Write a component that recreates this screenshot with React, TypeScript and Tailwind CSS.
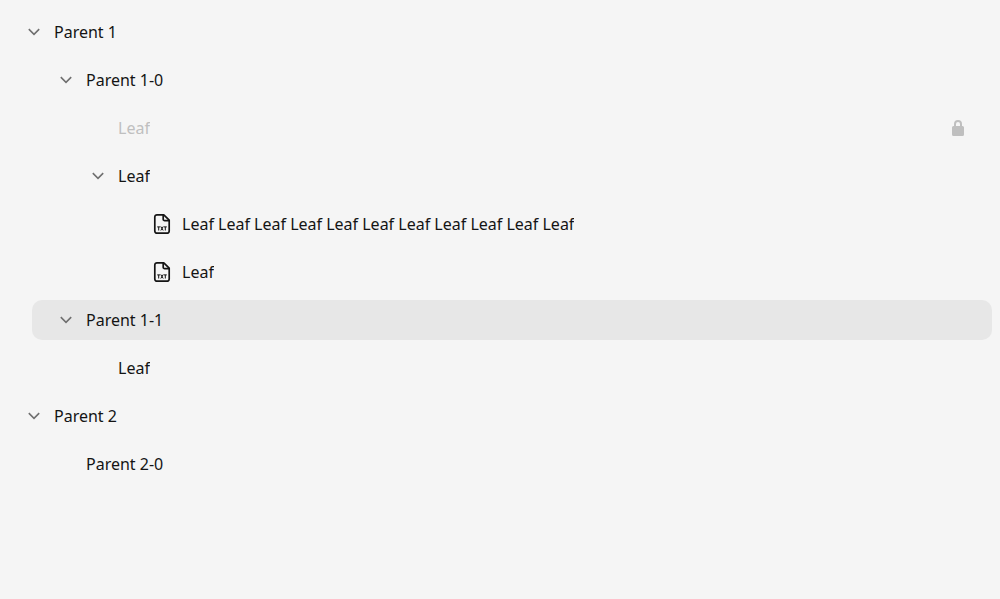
import { useState } from 'react';
import clsx from 'clsx';

type Node = {
  id: string;
  label: string;
  disabled?: boolean;
  file?: boolean;
  children?: Node[];
};

const tree: Node[] = [
  {
    id: '1',
    label: 'Parent 1',
    children: [
      {
        id: '1-0',
        label: 'Parent 1-0',
        children: [
          { id: '1-0-0', label: 'Leaf', disabled: true },
          {
            id: '1-0-1',
            label: 'Leaf',
            children: [
              { id: '1-0-1-0', label: 'Leaf Leaf Leaf Leaf Leaf Leaf Leaf Leaf Leaf Leaf Leaf', file: true },
              { id: '1-0-1-1', label: 'Leaf', file: true },
            ],
          },
        ],
      },
      { id: '1-1', label: 'Parent 1-1', children: [{ id: '1-1-0', label: 'Leaf' }] },
    ],
  },
  { id: '2', label: 'Parent 2', children: [{ id: '2-0', label: 'Parent 2-0' }] },
];

function ChevronIcon({ open }: { open: boolean }) {
  return (
    <svg viewBox="0 0 20 20" className={clsx('size-5', !open && '-rotate-90')} fill="none" stroke="currentColor" strokeWidth="1.6" aria-hidden="true">
      <path d="M4.8 7.1 10 12.3l5.2-5.2" />
    </svg>
  );
}

function TextFileIcon() {
  return (
    <svg viewBox="0 0 24 24" className="size-6 shrink-0" fill="none" stroke="currentColor" strokeWidth="1.7" strokeLinejoin="round" aria-hidden="true">
      <path d="M13.8 2.8H7a2.200 2.200 0 0 0-2.200 2.200v14a2.200 2.200 0 0 0 2.200 2.200h10a2.200 2.200 0 0 0 2.200-2.200V8.200z" />
      <path d="M13.2 3v4.200a1.500 1.500 0 0 0 1.500 1.500H19" />
      <path d="M7.200 14.900h3M8.700 14.900v3.600M10.800 14.500l2.400 4M13.200 14.500l-2.400 4M13.800 14.900h3M15.300 14.900v3.600" strokeWidth="1" />
    </svg>
  );
}

function LockIcon() {
  return (
    <svg viewBox="0 0 24 24" className="size-6 shrink-0 text-[#bfbfbf]" fill="currentColor" role="img" aria-label="Locked">
      <path fillRule="evenodd" d="M8 10V8a4 4 0 0 1 8 0v2h.5A1.5 1.5 0 0 1 18 11.500v7a1.500 1.500 0 0 1-1.500 1.500h-9A1.500 1.500 0 0 1 6 18.500v-7A1.500 1.500 0 0 1 7.500 10zM10 10h4V8a2 2 0 0 0-4 0z" />
    </svg>
  );
}

function TreeItem({ node, selected, onSelect }: { node: Node; selected: string; onSelect: (id: string) => void }) {
  const [open, setOpen] = useState(true);
  const isSelected = node.id === selected;
  return (
    <li role="treeitem" aria-expanded={node.children ? open : undefined} aria-selected={isSelected} aria-disabled={node.disabled} className="flex flex-col gap-2">
      <div className={clsx('flex h-10 items-center rounded-[10px] pr-[22px] pl-6', isSelected && 'bg-[#e7e7e7]')}>
        {node.children ? (
          <button type="button" aria-label={`Toggle ${node.label}`} onClick={() => setOpen(!open)} className="mr-2.5 size-5 shrink-0 text-[#707070]">
            <ChevronIcon open={open} />
          </button>
        ) : (
          <span className="mr-2.5 size-5 shrink-0" />
        )}
        <button
          type="button"
          disabled={node.disabled}
          onClick={() => onSelect(node.id)}
          className={clsx('flex min-w-0 flex-1 items-center gap-2 text-left', node.disabled ? 'text-[#bfbfbf]' : 'text-[#141414]')}
        >
          {node.file && <TextFileIcon />}
          <span className="truncate">{node.label}</span>
        </button>
        {node.disabled && <LockIcon />}
      </div>
      {node.children && open && (
        <ul role="group" className="flex flex-col gap-2 pl-8">
          {node.children.map((child) => (
            <TreeItem key={child.id} node={child} selected={selected} onSelect={onSelect} />
          ))}
        </ul>
      )}
    </li>
  );
}

export default function App() {
  const [selected, setSelected] = useState('1-1');
  return (
    <main className="min-h-screen bg-[#f5f5f5] py-3 pr-2 font-['Noto_Sans',sans-serif] text-base leading-6">
      <ul role="tree" aria-label="Items" className="flex flex-col gap-2">
        {tree.map((node) => (
          <TreeItem key={node.id} node={node} selected={selected} onSelect={setSelected} />
        ))}
      </ul>
    </main>
  );
}
